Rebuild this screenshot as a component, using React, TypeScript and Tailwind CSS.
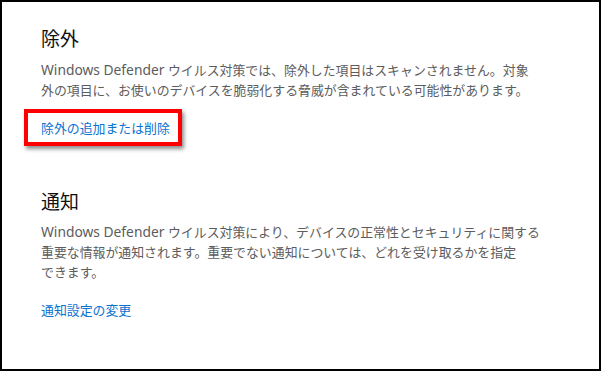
const latin = "font-['Noto_Sans','Noto_Sans_CJK_JP',sans-serif] text-[13.8px]";
const cjk = "font-['Noto_Sans_CJK_JP',sans-serif] text-[12.9px]";

function Line({ children }: { children: React.ReactNode }) {
  return <div className="whitespace-nowrap h-[20px] leading-[20px]">{children}</div>;
}

function Section({
  title,
  lines,
  link,
  boxed,
}: {
  title: string;
  lines: React.ReactNode[];
  link: string;
  boxed?: boolean;
}) {
  return (
    <section className="flex flex-col items-start">
      <h2 className="font-['Noto_Sans_CJK_JP',sans-serif] text-[19px] leading-[28px] text-[#111]">{title}</h2>
      <div className="mt-[6.5px] text-[#5c5c5c]">
        {lines.map((l, i) => (
          <Line key={i}>{l}</Line>
        ))}
      </div>
      <div className="relative mt-[19px]">
        {boxed && (
          <span className="absolute -left-[17px] -right-[12px] -top-[9px] -bottom-[8px] border-[4px] border-[#ff0000] shadow-[2px_3px_4px_rgba(0,0,0,0.45)]" />
        )}
        <a className={`relative block h-[20px] leading-[20px] text-[#0a73d0] ${cjk}`}>{link}</a>
      </div>
    </section>
  );
}

export default function App() {
  return (
    <div className="w-[602px] h-[372px] bg-white">
      <div className="w-[601px] h-[371px] border-2 border-black pl-[39px] pt-[22px] flex flex-col">
        <Section
          title="除外"
          boxed
          lines={[
            <>
              <span className={latin}>Windows Defender </span>
              <span className={cjk}>ウイルス対策では、除外した項目はスキャンされません。対象</span>
            </>,
            <span className={cjk}>外の項目に、お使いのデバイスを脆弱化する脅威が含まれている可能性があります。</span>,
          ]}
          link="除外の追加または削除"
        />
        <div className="mt-[49px]">
          <Section
            title="通知"
            lines={[
              <>
                <span className={latin}>Windows Defender </span>
                <span className={cjk}>ウイルス対策により、デバイスの正常性とセキュリティに関する</span>
              </>,
              <span className={cjk}>重要な情報が通知されます。重要でない通知については、どれを受け取るかを指定</span>,
              <span className={cjk}>できます。</span>,
            ]}
            link="通知設定の変更"
          />
        </div>
      </div>
    </div>
  );
}
